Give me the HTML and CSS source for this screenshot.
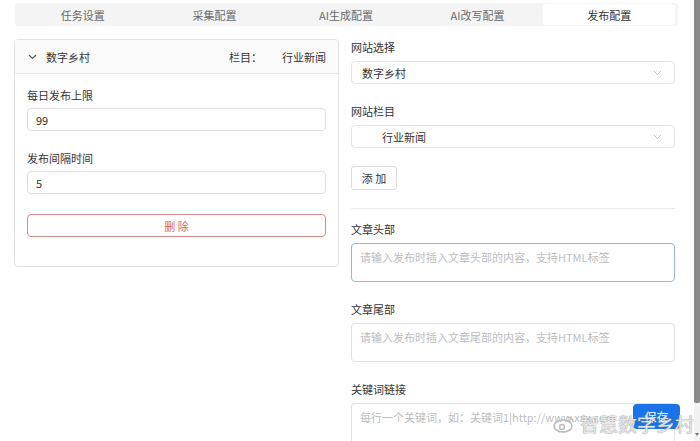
FILE: index.html
```html
<!DOCTYPE html>
<html lang="zh-CN">
<head>
<meta charset="utf-8">
<title>发布配置</title>
<link rel="stylesheet" href="styles.css">
</head>
<body>
<div class="page">
  <div class="tabs">
    <div class="tab">任务设置</div>
    <div class="tab">采集配置</div>
    <div class="tab">AI生成配置</div>
    <div class="tab">AI改写配置</div>
    <div class="tab active">发布配置</div>
  </div>
  <div class="content">
    <div class="card">
      <div class="card-head">
        <svg class="chev" width="9" height="6" viewBox="0 0 9 6"><path d="M1 1 L4.5 4.5 L8 1" fill="none" stroke="#555" stroke-width="1.1"/></svg>
        <span class="site">数字乡村</span>
        <span class="col-label">栏目：</span>
        <span class="col-val">行业新闻</span>
      </div>
      <div class="card-body">
        <div class="field">
          <div class="label">每日发布上限</div>
          <div class="input">99</div>
        </div>
        <div class="field">
          <div class="label">发布间隔时间</div>
          <div class="input">5</div>
        </div>
        <div class="btn-danger">删 除</div>
      </div>
    </div>
    <div class="right">
      <div class="field">
        <div class="label">网站选择</div>
        <div class="select"><span>数字乡村</span><svg width="9" height="6" viewBox="0 0 9 6"><path d="M1 1 L4.5 4.5 L8 1" fill="none" stroke="#c8c8c8" stroke-width="1"/></svg></div>
      </div>
      <div class="field">
        <div class="label">网站栏目</div>
        <div class="select indent"><span>行业新闻</span><svg width="9" height="6" viewBox="0 0 9 6"><path d="M1 1 L4.5 4.5 L8 1" fill="none" stroke="#c8c8c8" stroke-width="1"/></svg></div>
      </div>
      <div class="btn">添 加</div>
      <div class="divider"></div>
      <div class="field">
        <div class="label">文章头部</div>
        <div class="textarea focus">请输入发布时插入文章头部的内容，支持HTML标签</div>
      </div>
      <div class="field">
        <div class="label">文章尾部</div>
        <div class="textarea">请输入发布时插入文章尾部的内容，支持HTML标签</div>
      </div>
      <div class="field last">
        <div class="label">关键词链接</div>
        <div class="textarea tall">每行一个关键词，如：关键词1|http://www.xxx.com</div>
      </div>
    </div>
  </div>
</div>
<div class="save">保存</div>
<div class="watermark">
  <svg width="22" height="18" viewBox="0 0 22 18"><ellipse cx="10" cy="11" rx="9" ry="6" fill="none" stroke="#bbb" stroke-width="1.6"/><circle cx="9" cy="12" r="2.5" fill="none" stroke="#bbb" stroke-width="1.4"/><path d="M15 2 A6 6 0 0 1 20 7" fill="none" stroke="#bbb" stroke-width="1.4"/></svg>
  <span>智慧数字乡村</span>
</div>
<div class="scrollbar"><div class="thumb"></div><div class="arrow"></div></div>
</body>
</html>
```
FILE: styles.css
```css
* { box-sizing: border-box; }
html, body { margin: 0; padding: 0; }
body {
  width: 700px;
  height: 441px;
  overflow: hidden;
  background: #fff;
  font-family: "Noto Sans CJK SC", "Noto Sans", sans-serif;
  font-size: 11px;
  color: #333;
  position: relative;
}
.page { padding: 3px 0 0 14px; width: 678px; }
.tabs {
  display: flex;
  height: 23px;
  margin-left: 1px;
  background: #f4f4f4;
  border-radius: 3px;
  padding: 1px 3px 1px 2px;
}
.tab {
  flex: 1;
  display: flex;
  align-items: center;
  justify-content: center;
  color: #6a6a6a;
  font-size: 11px;
  border-radius: 3px;
}
.tab.active { background: #fff; color: #333; }
.content {
  display: grid;
  grid-template-columns: 325px 324px;
  column-gap: 12px;
  margin-top: 13px;
  align-items: start;
}
.card {
  border: 1px solid #e3e3e3;
  border-radius: 4px;
  overflow: hidden;
}
.card-head {
  height: 34px;
  background: #fafafa;
  border-bottom: 1px solid #e8e8e8;
  display: flex;
  align-items: center;
  padding: 0 12px 0 13px;
}
.chev { margin-right: 9px; }
.site { flex: 1; }
.col-label { margin-right: 20px; }
.card-body { padding: 13px 12px 29px 12px; }
.field { margin-bottom: 19px; }
.field.last { margin-bottom: 0; }
.label { height: 16px; line-height: 16px; margin-bottom: 6px; }
.card-body .label { margin-bottom: 5px; }
.input, .select {
  height: 23px;
  border: 1px solid #dedede;
  border-radius: 4px;
  display: flex;
  align-items: center;
  padding-left: 8px;
}
.card-body .field:nth-child(2) { margin-bottom: 20px; }
.btn-danger {
  height: 23px;
  border: 1px solid #d48a8a;
  border-radius: 4px;
  color: #dc6464;
  display: flex;
  align-items: center;
  justify-content: center;
}
.select {
  justify-content: space-between;
  padding: 0 12px 0 10px;
  border-color: #e5e5e5;
}
.select.indent { padding-left: 30px; }
.btn {
  width: 46px;
  height: 24px;
  border: 1px solid #dcdcdc;
  border-radius: 3px;
  display: flex;
  align-items: center;
  justify-content: center;
  margin-top: -1px;
}
.divider { height: 1px; background: #ececec; margin: 18px 0 12px; }
.textarea {
  height: 39px;
  border: 1px solid #e2e2e2;
  border-radius: 4px;
  padding: 5px 8px;
  color: #bdbdbd;
  line-height: 16px;
}
.textarea.focus { border-color: #93bfc0; }
.textarea.tall { height: 38px; border-bottom: none; border-radius: 4px 4px 0 0; }
.save {
  position: absolute;
  left: 633px;
  top: 404px;
  width: 47px;
  height: 25px;
  background: #1a73e8;
  color: #fff;
  border-radius: 4px;
  font-size: 12px;
  display: flex;
  align-items: center;
  justify-content: center;
}
.watermark {
  position: absolute;
  left: 553px;
  top: 410px;
  display: flex;
  align-items: center;
  gap: 5px;
  pointer-events: none;
}
.watermark span {
  font-size: 19px;
  color: rgba(255, 255, 255, 0.75);
  text-shadow: 0 0 1px #999, 0 0 1px #999;
}
.scrollbar {
  position: absolute;
  right: 0;
  top: 0;
  width: 6px;
  height: 441px;
  background: #f1f1f1;
}
.thumb { height: 403px; background: #8a8a8a; border-radius: 0 0 2px 2px; }
.arrow {
  position: absolute;
  left: 1px;
  top: 433px;
  width: 0;
  height: 0;
  border-left: 2px solid transparent;
  border-right: 2px solid transparent;
  border-top: 3px solid #777;
}
```
